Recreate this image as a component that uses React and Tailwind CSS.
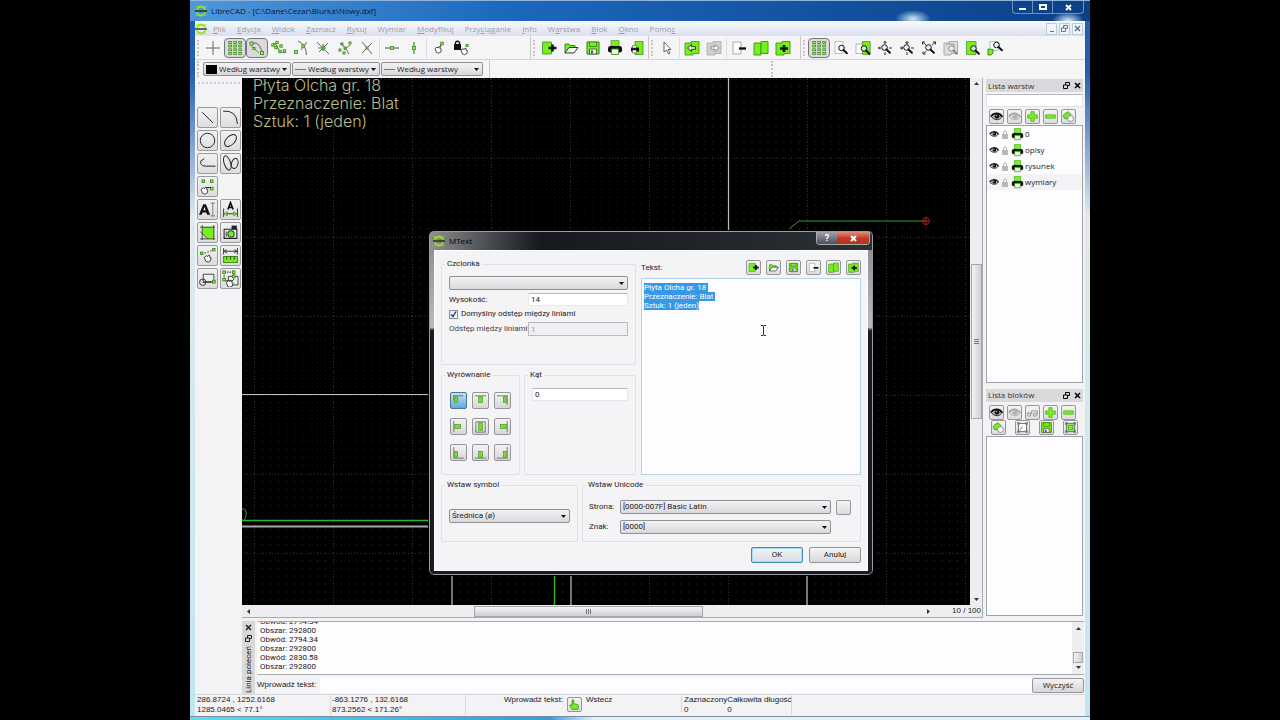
import React, { useEffect, useRef } from "react";

const LIME = "#76f01c";
const GREEN = "#3f8f1c";

function Svg({ size = 16, children }) {
  return (
    <svg width={size} height={size} viewBox="0 0 16 16" fill="none" aria-hidden="true" className="shrink-0">
      {children}
    </svg>
  );
}

const Node = ({ x, y, s = 3 }) => (
  <rect x={x - s / 2} y={y - s / 2} width={s} height={s} fill="#a6ee6a" stroke={GREEN} strokeWidth="0.9" />
);
const Lens = ({ x = 9, y = 9, c = "#111" }) => (
  <g>
    <circle cx={x} cy={y} r="2.8" fill="#e8f4fb" fillOpacity="0.8" stroke={c} strokeWidth="1" />
    <path d={`M${x + 2} ${y + 2} l3.4 3.2`} stroke={c} strokeWidth="2" strokeLinecap="round" />
  </g>
);
const Hand = ({ x = 0, y = 0 }) => (
  <path
    transform={`translate(${x} ${y})`}
    d="M1 3.6 L3 2.2 L4.2 3 L5 1.6 L6.2 2.2 L6 3.6 L7.4 4.2 L6.8 7 L4.6 8.2 L2.4 7.4 Z"
    fill="#fff"
    stroke="#222"
    strokeWidth="0.8"
  />
);
const GridDots = () => (
  <g>
    {[2.5, 6, 9.8, 13.4].map((y) =>
      [3, 8, 13].map((x) => (
        <rect key={`${x}-${y}`} x={x - 1.2} y={y - 1} width="2.6" height="2" fill="#a6ee6a" stroke={GREEN} strokeWidth="0.8" />
      ))
    )}
  </g>
);
const Printer = () => (
  <g>
    <path d="M4 0.5h8v6H4z" fill={LIME} stroke={GREEN} strokeWidth="0.6" />
    <path d="M3.5 6Q1 6 1 8.500V10.500Q1 12.500 3.500 12.500H12.500Q15 12.500 15 10.500V8.500Q15 6 12.500 6Z" fill="#111" />
    <path d="M4.500 9h7v5.500h-7z" fill="#eefde0" stroke={GREEN} strokeWidth="0.900" />
  </g>
);
const Eye = ({ c = "#111" }) => (
  <g>
    <path d="M1 8Q4 3.600 8.500 3.800Q13 4 15.200 8.400Q12 12 8 12Q3.600 12 1 8Z" fill={c} fillOpacity="0.200" />
    <path d="M1 8Q4 4 8.500 4.200Q13 4.500 15.200 8.800" stroke={c} strokeWidth="2.200" />
    <path d="M2 9Q5 12 9 12Q12 11.800 14 9.500" stroke={c} strokeWidth="1" />
    <circle cx="8.600" cy="7.800" r="3" fill={c} />
    <circle cx="7.600" cy="6.800" r="0.800" fill="#fff" />
  </g>
);
const Plus = () => <path d="M6 2h4v4h4v4h-4v4H6v-4H2V6h4z" fill={LIME} stroke="#58b52a" />;
const Minus = () => <path d="M2 6h12v4H2z" fill={LIME} stroke="#58b52a" />;
const Edit = () => (
  <g>
    <path d="M1.500 6.500L7 2l4 3.500-4.500 5.500-4-1z" fill={LIME} stroke={GREEN} />
    <circle cx="10.500" cy="10.500" r="3.600" fill="#fff" stroke="#777" />
  </g>
);
const Floppy = () => (
  <g>
    <path d="M2 2h12v12H2z" fill={LIME} stroke="#357a18" />
    <path d="M4.500 2h7v4.500h-7z" fill={LIME} stroke="#357a18" strokeWidth="0.800" />
    <path d="M4.500 9h7v5h-7z" fill="#eee" stroke="#444" strokeWidth="0.800" />
    <path d="M6 10.500h2v3H6z" fill="#555" />
  </g>
);
const Logo = () => (
  <g>
    <path d="M2 6Q8 -2 14 6M2 10Q8 18 14 10" stroke="#9be01c" strokeWidth="2.400" />
    <path d="M0 8h16" stroke="#12351a" strokeWidth="1.800" />
    <path d="M1 2h2M13 2h2M1 14h2M13 14h2" stroke="#9be01c" strokeWidth="1.500" />
  </g>
);

const ICONS = {
  cross: <path d="M8 1v14M1 8h14" stroke="#555" strokeWidth="0.900" />,
  grid: <GridDots />,
  snapEnd: (
    <g>
      <path d="M2.500 3.500L7 3Q11.500 5 12 9L14 12.500" stroke="#555" strokeWidth="0.900" />
      <path d="M2 6L6 9.500L10 13" stroke={GREEN} strokeWidth="0.800" />
      <Node x={2.5} y={3.5} /><Node x={13} y={13} /><Node x={5} y={8.5} s={2} />
    </g>
  ),
  snapOn: (
    <g>
      <path d="M2 3Q6 4 7 8T14 13" stroke="#555" strokeWidth="0.900" />
      <Node x={2} y={5} s={2.4} /><Node x={6} y={2.5} s={2.4} /><Node x={5} y={7.5} s={2.4} /><Node x={10} y={6} s={2.4} /><Node x={9} y={11.5} s={2.4} /><Node x={13.5} y={11} s={2.4} />
    </g>
  ),
  snapCenter: (
    <g>
      <path d="M5 1Q13 4 13.500 15M8 10L14 2" stroke="#555" strokeWidth="0.900" />
      <Node x={3} y={12} /><Node x={10} y={6} s={2.4} />
    </g>
  ),
  snapMiddle: (
    <g>
      <path d="M2 2Q6 7 14 14M4 12L13 3" stroke="#555" strokeWidth="0.900" />
      <path d="M3 8h8M8 4v7" stroke={GREEN} strokeWidth="1.200" />
      <Node x={8} y={8} s={2} />
    </g>
  ),
  snapDist: (
    <g>
      <path d="M3 3Q8 6 12 14M7 10l6-5" stroke="#555" strokeWidth="0.900" />
      <Node x={5} y={4} s={2} /><Node x={13} y={3} s={2} /><Node x={3} y={10} s={2} /><Node x={7} y={13} s={2} /><Node x={8} y={8} s={2} />
    </g>
  ),
  snapInter: (
    <g>
      <path d="M3 2l10 12M13 3L3 13" stroke="#555" strokeWidth="0.900" />
      <Node x={8} y={8} s={2} />
    </g>
  ),
  restrH: <g><path d="M1 8h14" stroke="#333" strokeWidth="0.900" /><Node x={8} y={8} /></g>,
  restrV: <g><path d="M8 2v12" stroke={GREEN} strokeWidth="1.200" /><Node x={8} y={8} /></g>,
  relZero: <g><Hand x={3} y={5} /><path d="M9 7l2-4" stroke="#222" /><Node x={11} y={3.5} s={2.5} /></g>,
  lockZero: (
    <g>
      <path d="M1 4h7v6H1z" fill="#111" /><path d="M2.500 4V2.500q2-2.500 4 0V4" stroke="#111" strokeWidth="1.300" />
      <Hand x={7} y={6.5} /><Node x={14} y={5.5} s={2} />
    </g>
  ),
  newFile: <g><path d="M1.500 2h9v12h-9z" fill={LIME} stroke={GREEN} strokeWidth="0.800" /><path d="M7.500 8h8M11.500 4.500v7" stroke="#111" strokeWidth="2.600" /></g>,
  open: (
    <g>
      <path d="M2 13V4h4l1 1.500h5V8" fill={LIME} stroke="#357a18" strokeWidth="0.900" />
      <path d="M2 13L6 7.500h9L11 13z" fill="#f3fde9" stroke="#222" strokeWidth="0.900" />
    </g>
  ),
  save: <Floppy />,
  print: <Printer />,
  preview: <g><path d="M6 1.500h8v13H6z" fill={LIME} stroke={GREEN} strokeWidth="0.800" /><path d="M2 7.500h8v4H2z" fill="#111" /><path d="M3.500 5.500h4V8h-4zM3.500 10h4v3h-4z" fill="#eefde0" stroke="#444" strokeWidth="0.600" /></g>,
  pointer: <path d="M5 2v10l2.500-2 2 4 1.500-1-2-3.500H12z" fill="#fff" stroke="#555" strokeWidth="0.900" />,
  undo: <g><path d="M1 3h6V1.500h8v12H9V15H1z" fill={LIME} stroke={GREEN} strokeWidth="0.800" /><path d="M3.500 8l4-3.500v2.200h4v2.600h-4v2.200z" fill="#e9fbd6" stroke="#222" strokeWidth="0.900" /></g>,
  redo: <g><path d="M1 3h6V1.500h8v12H9V15H1z" fill="#cfcfcf" stroke="#aaa" strokeWidth="0.800" /><path d="M13 8L9 4.500v2.200H5v2.600h4v2.200z" fill="#eee" stroke="#888" strokeWidth="0.900" /></g>,
  cut: <g><path d="M2 2h8v12H2z" fill="#fff" stroke="#aaa" /><path d="M8 8.500h7" stroke="#111" strokeWidth="2.400" /></g>,
  copy: <g><path d="M1 3h7v12H1z" fill={LIME} stroke={GREEN} strokeWidth="0.900" /><path d="M8 1.500h7v12H8z" fill={LIME} stroke={GREEN} strokeWidth="0.900" /></g>,
  paste: <g><path d="M1 3h6V1.500h8v12H9V15H1z" fill={LIME} stroke={GREEN} strokeWidth="0.900" /><path d="M5 8.500h8M9 5v7" stroke="#111" strokeWidth="2.600" /></g>,
  zoomRe: <g><path d="M2 1.500h8v12H2z" fill="#fff" stroke="#bbb" /><Lens x={8.5} y={8} /></g>,
  zoomWin: <g><path d="M1 4h6V2h8v11.500H1z" fill="#fff" stroke="#999" strokeWidth="0.700" /><path d="M7.500 1.500H15v13H7.500z" fill={LIME} stroke={GREEN} strokeWidth="0.700" /><Lens x={9} y={8.5} /></g>,
  zoomIn: <g><path d="M8 1v3M8 12v3M1 8h3M12 8h3M6.500 3L8 1.500 9.500 3M3 6.500L1.500 8 3 9.500" stroke="#333" /><Lens x={7.5} y={7.5} /></g>,
  zoomOut: <g><path d="M8 1v3M8 12v3M1 8h3M12 8h3M6.500 2L8 4 9.500 2M2 6.500L4 8 2 9.500" stroke="#333" /><Lens x={7.5} y={7.5} /></g>,
  zoomAuto: <g><path d="M1.500 2l4 3.500M14.500 2l-3.500 3M2 14l3.500-3M1.500 4.500V2H4M12 2h2.500v2.500M2 11.500V14h2.500" stroke="#333" /><Lens x={7.5} y={7.5} /></g>,
  zoomPrev: <g><path d="M1 3h5V1.500h8.500v12H8V15H1z" fill="#ddd" stroke="#aaa" /><path d="M3 5l4-2v1h4v3" stroke="#999" /><Lens x={8.5} y={8.5} c="#888" /></g>,
  zoomSel: <g><path d="M1.500 1.500h9.500v13H1.500z" fill={LIME} stroke={GREEN} strokeWidth="0.700" /><Lens x={8.5} y={8.5} /></g>,
  zoomPan: <g><path d="M3 1.500h8v9H3z" fill="#fff" stroke="#bbb" /><path d="M1 9l5 .5V13l-2 2H1z" fill={LIME} stroke={GREEN} /><Lens x={9.5} y={5} /></g>,
  eye: <Eye />,
  eyeOff: <Eye c="#aaa" />,
  plus: <Plus />,
  minus: <Minus />,
  edit: <Edit />,
  defreeze: <g><path d="M1 9h6V6h7v4h-2" stroke="#888" /><circle cx="4" cy="10.500" r="2" fill="#ddd" stroke="#888" /><circle cx="11" cy="10.500" r="2" fill="#ddd" stroke="#888" /></g>,
  blockEdit: <g><path d="M3 3h10v10H3z" fill="#fff" stroke="#555" />{[3, 13].map((x) => [3, 13].map((y) => <rect key={x + "-" + y} x={x - 1.5} y={y - 1.5} width="3" height="3" fill="#777" />))}<path d="M5 11l3-4" stroke="#555" /></g>,
  blockInsert: <g><path d="M3 3h10v10H3z" fill="#d8f8b8" stroke="#466" />{[3, 13].map((x) => [3, 13].map((y) => <rect key={x + "-" + y} x={x - 1.5} y={y - 1.5} width="3" height="3" fill="#576" />))}<path d="M5 5h6v6H5z" fill={LIME} stroke={GREEN} /></g>,
  line: <path d="M3 3l10 10" stroke="#222" strokeWidth="0.900" />,
  arc: <path d="M1 2Q14 1 14.500 14" stroke="#222" strokeWidth="0.900" />,
  circle: <circle cx="8" cy="8" r="6.800" stroke="#222" strokeWidth="0.900" />,
  ellipse: <ellipse cx="8" cy="8" rx="6.800" ry="4" transform="rotate(-45 8 8)" stroke="#222" strokeWidth="0.900" />,
  spline: <path d="M5 3.500Q.5 5 1.500 8Q3 11 7 10.500H15.500" stroke="#222" strokeWidth="0.900" />,
  poly: <g stroke="#222" strokeWidth="0.900"><ellipse cx="5" cy="7.500" rx="3" ry="7" transform="rotate(-18 5 7.500)" /><ellipse cx="12" cy="8" rx="3" ry="4.800" transform="rotate(15 12 8)" /></g>,
  points: <g><Node x={4} y={3} s={2.4} /><Node x={12} y={3} s={2.4} /><Node x={12} y={10} s={2.4} /><Hand x={1} y={7} /><path d="M7 9h4" stroke="#222" /></g>,
  text: <g><path d="M0 13L4 3h2.500l4 10H7.600l-.7-2.200H3.300L2.600 13zM4 8.800h2.300L5.200 5.500z" fill="#111" fillRule="evenodd" /><path d="M11 2h4M13 2v12M11 14h4" stroke="#888" /></g>,
  dim: <g><path d="M5.500 8L8 1.500 10.500 8M6.500 6h3" stroke="#111" strokeWidth="1.500" /><path d="M1.500 7v8M14.500 7v8M2 12h12" stroke="#333" strokeWidth="0.900" /><path d="M2 12l3-2v4zM14 12l-3-2v4z" fill={LIME} stroke={GREEN} strokeWidth="0.600" /></g>,
  hatch: <g><path d="M3 2.500h11v11.500H8L3 8.500z" fill={LIME} /><path d="M1 3h14M3 1v14M14 1v14M1 14h14M1 7l7 7" stroke="#333" strokeWidth="0.800" /></g>,
  image: <g><path d="M2 5h12v8.500H2z" fill="#eee" stroke="#222" /><path d="M9 1.500h5V5H9z" fill="#223" /><path d="M4 7v5" stroke="#555" /><circle cx="8.500" cy="9.300" r="3" fill={LIME} stroke="#244" /></g>,
  modify: <g><path d="M2 7L13 3" stroke="#555" strokeWidth="0.800" strokeDasharray="2 1" /><Node x={2.5} y={6} s={2.2} /><Node x={14} y={2.5} s={2.2} /><Hand x={4} y={6} /></g>,
  measure: <g><path d="M1.500 9h13v5.500h-13z" fill={LIME} stroke={GREEN} /><path d="M4.500 9v3M8 9v3M11.500 9v3M1.500 1v6M14.500 1v6M2 4h12M4.500 2.500L2 4l2.500 1.500M11.500 2.500L14 4l-2.500 1.500" stroke="#333" strokeWidth="0.900" /></g>,
  block: <g><path d="M4 4h10v7H4z" fill="#eee" stroke="#444" strokeWidth="0.900" /><circle cx="3.500" cy="11.500" r="3" stroke="#333" strokeWidth="0.900" /><path d="M3.500 11.500H12" stroke="#333" /><Node x={14} y={11} s={2.5} /></g>,
  select: <g><path d="M6 6h9v8H6z" fill="#eee" stroke="#444" strokeWidth="0.900" /><path d="M2 2h9v8H2z" stroke="#444" strokeDasharray="1.500 1" /><Node x={2} y={2} s={2.4} /><Node x={11} y={2} s={2.4} /><Node x={2} y={9} s={2.4} /><Node x={11} y={6} s={2.4} /><Hand x={3} y={8} /></g>,
  tap: <path d="M5 14L2 9l1.500-.8L5 9.500V2.500q1-1.500 2 0V7l5 1.200q1.500.6 1 2.300L12 14z" fill={LIME} stroke={GREEN} />,
};

const Icon = ({ name, size }) => <Svg size={size}>{ICONS[name]}</Svg>;

function ToolButton({ icon, label, checked }) {
  return (
    <button
      type="button"
      aria-label={label}
      aria-pressed={checked}
      className={
        "flex h-5 w-[22px] shrink-0 items-center justify-center rounded-sm " +
        (checked ? "border border-[#77777b] bg-[#dadade]" : "")
      }
    >
      <Icon name={icon} />
    </button>
  );
}

function SmallButton({ icon, label, size = 13 }) {
  return (
    <button
      type="button"
      aria-label={label}
      className="flex h-[15px] w-[15px] shrink-0 items-center justify-center rounded-xs border border-[#97979b] bg-linear-to-b from-[#f4f4f5] to-[#dcdcde]"
    >
      {icon && <Icon name={icon} size={size} />}
    </button>
  );
}

const Handle = () => <span className="mx-[2px] h-4 w-[3px] shrink-0 border-l-2 border-dotted border-[#c4c4c8]" />;
const Divider = () => <span className="mx-px h-5 w-px shrink-0 bg-[#dedee1]" />;

function Bar({ items, className = "" }) {
  return (
    <div role="toolbar" className={"flex items-center border-r border-[#c9c9cd] " + className}>
      <Handle />
      {items.map(([icon, label, checked], i) =>
        icon === "|" ? <Divider key={i} /> : <ToolButton key={i} icon={icon} label={label} checked={checked} />
      )}
    </div>
  );
}

const SNAP = [
  ["cross", "Swobodne"], ["grid", "Siatka", true], ["snapEnd", "Punkty końcowe", true], ["snapOn", "Na elemencie"],
  ["snapCenter", "Środek okręgu"], ["snapMiddle", "Środek"], ["snapDist", "Odległość"], ["snapInter", "Przecięcie"],
  ["|"], ["restrH", "Poziomo"], ["restrV", "Pionowo"], ["|"], ["relZero", "Względne zero"], ["lockZero", "Zablokuj zero"],
];
const FILE = [["newFile", "Nowy"], ["open", "Otwórz"], ["save", "Zapisz"], ["print", "Drukuj"], ["preview", "Podgląd wydruku"]];
const EDIT = [
  ["pointer", "Wskaźnik"], ["|"], ["undo", "Cofnij"], ["redo", "Ponów"], ["|"], ["cut", "Wytnij"], ["copy", "Kopiuj"], ["paste", "Wklej"],
];
const VIEW = [
  ["grid", "Pokaż siatkę", true], ["zoomRe", "Odśwież"], ["zoomWin", "Powiększ okno"], ["zoomIn", "Powiększ"], ["zoomOut", "Pomniejsz"],
  ["zoomAuto", "Auto"], ["zoomPrev", "Poprzedni widok"], ["zoomSel", "Zaznaczenie"], ["zoomPan", "Przesuń"],
];
const TOOLS = [
  ["line", "Linia"], ["arc", "Łuk"], ["circle", "Okrąg"], ["ellipse", "Elipsa"], ["spline", "Krzywa"], ["poly", "Polilinia"],
  ["points", "Punkty"], null, ["text", "Tekst"], ["dim", "Wymiar"], ["hatch", "Kreskowanie"], ["image", "Obraz"],
  ["modify", "Modyfikuj"], ["measure", "Pomiar"], ["block", "Blok"], ["select", "Zaznacz"],
];
const MENU = [
  ["", "P", "lik"], ["", "E", "dycja"], ["", "W", "idok"], ["", "Z", "aznacz"], ["", "R", "ysuj"], ["Wymiar", "", ""],
  ["", "M", "odyfikuj"], ["Przy", "c", "iąganie"], ["", "I", "nfo"], ["W", "a", "rstwa"], ["", "B", "lok"], ["", "O", "kno"], ["Pomo", "c", ""],
];

function Select({ label, value, id, className = "", swatch }) {
  return (
    <div className={"relative flex items-center " + className}>
      <select
        id={id}
        aria-label={label}
        className={
          "h-[14px] w-full appearance-none rounded-xs border border-[#8f8f94] bg-linear-to-b from-[#f3f3f4] to-[#d9d9dc] pr-2 text-[#1c1c1c] outline-none " +
          (swatch ? "pl-[15px]" : "pl-[2px]")
        }
      >
        <option>{value}</option>
      </select>
      {swatch === "black" && <span className="absolute left-[3px] h-[9px] w-[11px] bg-black" />}
      {swatch === "line" && <span className="absolute left-[3px] h-px w-[11px] bg-[#777]" />}
      <svg width="5" height="3" viewBox="0 0 5 3" className="pointer-events-none absolute right-1" aria-hidden="true">
        <path d="M0 0h5L2.500 3z" fill="#111" />
      </svg>
    </div>
  );
}

function Restore() {
  return (
    <svg width="7" height="7" viewBox="0 0 7 7" fill="none" aria-hidden="true">
      <path d="M2.500 3V.5h4v3H5M.5 3h4v3.500h-4z" stroke="currentColor" strokeWidth="1" />
    </svg>
  );
}
function Cross({ w = 1.5 }) {
  return (
    <svg width="7" height="7" viewBox="0 0 7 7" aria-hidden="true">
      <path d="M1 1l5 5M6 1L1 6" stroke="currentColor" strokeWidth={w} />
    </svg>
  );
}

function DockTitle({ children }) {
  return (
    <div className="flex h-[13px] items-center gap-1 bg-[#d9d9dc] px-[2px] text-[#333]">
      <h2 className="flex-1">{children}</h2>
      <button type="button" aria-label="Odepnij" className="text-black"><Restore /></button>
      <button type="button" aria-label="Zamknij" className="text-black"><Cross /></button>
    </div>
  );
}

function Arrow({ dir }) {
  const d = { up: "M0 4h5L2.500 1z", down: "M0 1h5L2.500 4z", left: "M4 0v5L1 2.500z", right: "M1 0v5L4 2.500z" }[dir];
  return <svg width="5" height="5" viewBox="0 0 5 5" aria-hidden="true"><path d={d} fill="#333" /></svg>;
}

function Drawing() {
  return (
    <div className="relative min-h-0 min-w-0 flex-1 overflow-hidden bg-black">
      <svg className="absolute inset-0 h-full w-full" fill="none" role="img" aria-label="Rysunek">
        <defs>
          <pattern id="minor" width="7.900" height="7.900" x="4" y="8" patternUnits="userSpaceOnUse">
            <rect width="1" height="1" x="0" y="0" fill="#303230" />
          </pattern>
          <pattern id="major" width="79" height="79" x="12" y="80" patternUnits="userSpaceOnUse">
            <path d="M.5 0V79M0 .5H79" stroke="#282a28" strokeWidth="1" strokeDasharray="1 2" />
          </pattern>
        </defs>
        <rect width="100%" height="100%" fill="url(#minor)" />
        <rect width="100%" height="100%" fill="url(#major)" />
        <path d="M486.500 0V160M0 316.500H190M210 490V540M329 490V540M565 490V540" stroke="#bdbdbd" strokeWidth="1.200" />
        <path d="M0 448.500H190" stroke="#a8a8a8" strokeWidth="2" />
        <path d="M0 442.500H190M312.500 490V540" stroke="#2fb52f" strokeWidth="1.400" />
        <path d="M0 431q5-1 4 6t-4 5M684 143H557L547 151" stroke="#2f9a2f" />
        <circle cx="684" cy="143" r="3.500" stroke="#b01818" />
        <path d="M680 143h8M684 139v8" stroke="#b01818" />
      </svg>
      <p className="relative -mt-0.5 pl-[11px] font-['Inter',sans-serif] text-base leading-[18px] font-light whitespace-pre text-[#b9bd8e]">
        {"Płyta Olcha gr. 18\nPrzeznaczenie: Blat\nSztuk: 1 (jeden)"}
      </p>
    </div>
  );
}

function Group({ title, className = "", inner = "", children }) {
  return (
    <fieldset className={"min-w-0 rounded-xs border border-[#dfe1e6] " + className}>
      <legend className="ml-[3px] px-[2px] leading-3">{title}</legend>
      <div className={inner}>{children}</div>
    </fieldset>
  );
}

const ALIGN = [
  ["Góra lewo", "M3 3h10M3 2v6", 4, 4, 3, 6], ["Góra środek", "M2 3h12", 6, 4, 4, 6], ["Góra prawo", "M2 3h11M13 2v11", 9, 4, 3, 6],
  ["Środek lewo", "M3 2v12", 4, 6, 6, 4], ["Środek", "M3 3h10v11H3z", 6, 4, 4, 8], ["Środek prawo", "M13 2v12", 6, 6, 6, 4],
  ["Dół lewo", "M3 2v12h11", 4, 7, 3, 6], ["Dół środek", "M2 14h12", 6, 7, 4, 6], ["Dół prawo", "M13 2v12H2", 9, 7, 3, 6],
];

const TEXT_BUTTONS = [["newFile", "Wyczyść"], ["open", "Wczytaj"], ["save", "Zapisz tekst"], ["cut", "Wytnij tekst"], ["copy", "Kopiuj tekst"], ["paste", "Wklej tekst"]];

const inputCls = "h-[13px] min-w-0 flex-1 border border-t-[#b5b8bd] border-[#e6e7ea] bg-white pr-1 pl-[2px] outline-none";

function MTextDialog() {
  const area = useRef(null);
  useEffect(() => {
    area.current.focus();
    area.current.select();
  }, []);
  return (
    <section
      role="dialog"
      aria-label="MText"
      className="absolute top-[230px] left-[238px] flex w-[446px] flex-col rounded-md border border-black bg-[#2b2e33] bg-linear-to-b from-[#85888c] from-0% via-[#b9babd] via-28% to-[#181b20] to-29% px-[5px] pb-1 font-['Roboto','Liberation_Sans',sans-serif] shadow-[inset_0_0_0_1px_#9a9da2]"
    >
      <header className="-mx-1 mt-px flex h-[18px] items-start rounded-t-sm bg-linear-to-r from-[#8d8f92] via-[#16191d] via-25% to-[#2c3136] pl-[3px] text-black">
        <span className="flex h-full flex-1 items-center gap-1">
          <Svg size={12}><Logo /></Svg>
          <h1 className="font-['Open_Sans','Noto_Sans',sans-serif]">MText</h1>
        </span>
        <span className="mr-[2px] flex h-[13px] overflow-hidden rounded-b-sm border border-t-0 border-[#a9abb0] text-white">
          <button type="button" aria-label="Pomoc" className="flex w-[20px] items-center justify-center bg-linear-to-b from-[#a0a2ab] to-[#4f515c] text-[9px] font-bold">?</button>
          <button type="button" aria-label="Zamknij okno" className="flex w-8 items-center justify-center bg-linear-to-b from-[#dd8c7f] via-[#c23a26] to-[#b8321e]"><Cross w={2} /></button>
        </span>
      </header>
      <div className="flex flex-col gap-1 border border-white bg-[#f4f3f5] px-1.5 pt-[7px] pb-[7px]">
        <div className="flex gap-[5px]">
          <div className="flex w-[195px] shrink-0 flex-col gap-1">
            <Group title="Czcionka" className="h-[107px]" inner="px-[7px] pt-[6px]">
              <Select label="Czcionka" value="" />
              <div className="mt-[3px] flex items-center">
                <label htmlFor="height" className="w-[79px] shrink-0">Wysokość:</label>
                <input id="height" defaultValue="14" className={inputCls} />
              </div>
              <label className="mt-0.5 flex h-3 items-center gap-[3px]">
                <input
                  type="checkbox"
                  defaultChecked
                  className="peer h-[9px] w-[9px] appearance-none border border-[#8b8f96] bg-[#e8eef6] bg-[linear-gradient(135deg,#dfe7f2,#ffffff)]"
                />
                <svg width="9" height="9" viewBox="0 0 9 9" fill="none" className="-ml-3 hidden peer-checked:block" aria-hidden="true">
                  <path d="M2 4.500L4 6.500 7 1.500" stroke="#283c7c" strokeWidth="1.400" />
                </svg>
                Domyślny odstęp między liniami
              </label>
              <div className="mt-0.5 flex items-center text-[#444]">
                <label htmlFor="spacing" className="w-[79px] shrink-0 whitespace-nowrap">Odstęp między liniami:</label>
                <input id="spacing" disabled defaultValue="1" className="h-[14px] min-w-0 flex-1 border border-[#b9bbbf] bg-[#f0eff1] pl-[2px] text-[#999]" />
              </div>
            </Group>
            <div className="flex gap-1">
              <Group title="Wyrównanie" className="h-[106px] w-[79px] shrink-0" inner="px-2 pt-[11px]">
                <div className="grid grid-cols-3 gap-x-[5px] gap-y-[9px]">
                  {ALIGN.map(([label, path, x, y, w, h], i) => (
                    <button
                      key={label}
                      type="button"
                      aria-label={label}
                      aria-pressed={i === 0}
                      className={
                        "flex h-[17px] w-[17px] items-center justify-center rounded-xs border " +
                        (i === 0
                          ? "border-[#4c7891] bg-linear-to-b from-[#c5e1f3] to-[#5fabd8]"
                          : "border-[#949499] bg-linear-to-b from-[#f4f4f5] to-[#d6d6d9]")
                      }
                    >
                      <Svg size={15}>
                        <path d={path} stroke="#666" strokeWidth="0.900" />
                        <rect x={x} y={y} width={w} height={h} fill="#7ae01c" stroke={GREEN} strokeWidth="0.700" />
                      </Svg>
                    </button>
                  ))}
                </div>
              </Group>
              <Group title="Kąt" className="h-[106px] flex-1" inner="flex px-[7px] pt-[7px]">
                <input aria-label="Kąt" defaultValue="0" className={inputCls} />
              </Group>
            </div>
          </div>
          <div className="flex min-w-0 flex-1 flex-col">
            <div className="flex h-[19px] items-center">
              <label htmlFor="mtext" className="flex-1">Tekst:</label>
              <div className="flex gap-[5px]">
                {TEXT_BUTTONS.map(([icon, label]) => <SmallButton key={label} icon={icon} label={label} size={11} />)}
              </div>
            </div>
            <textarea
              id="mtext"
              ref={area}
              spellCheck={false}
              defaultValue={"Płyta Olcha gr. 18\nPrzeznaczenie: Blat\nSztuk: 1 (jeden)"}
              className="mt-px w-full flex-1 resize-none border border-[#b7d4e4] bg-[#fdfcfe] px-[2px] py-1 leading-[9px] outline-none selection:bg-[#3898e8] selection:text-white"
            />
          </div>
        </div>
        <div className="flex gap-1">
          <Group title="Wstaw symbol" className="h-[63px] w-[137px] shrink-0" inner="px-[7px] pt-[18px]">
            <Select label="Symbol" value="Średnica (ø)" />
          </Group>
          <Group title="Wstaw Unicode" className="h-[63px] flex-1" inner="flex flex-col gap-1 px-[6px] pt-2">
            <div className="flex h-4 items-center">
              <label htmlFor="page" className="w-[31px]">Strona:</label>
              <Select id="page" label="Strona" value="[0000-007F] Basic Latin" className="w-[211px]" />
              <span className="ml-[5px]"><SmallButton label="Wstaw znak" /></span>
            </div>
            <div className="flex h-4 items-center">
              <label htmlFor="char" className="w-[31px]">Znak:</label>
              <Select id="char" label="Znak" value="[0000]" className="w-[211px]" />
            </div>
          </Group>
        </div>
        <div className="mt-px flex justify-end gap-[6px]">
          <button type="button" className="h-4 w-[52px] rounded-xs border border-[#3f8fb5] bg-linear-to-b from-[#f2f4f5] to-[#d7dfe4] shadow-[inset_0_0_0_1px_#a5dcf2]">OK</button>
          <button type="button" className="h-4 w-[52px] rounded-xs border border-[#939397] bg-linear-to-b from-[#f4f4f5] to-[#d8d8db]">Anuluj</button>
        </div>
      </div>
      <svg width="7" height="11" viewBox="0 0 7 11" fill="none" className="absolute top-[94px] left-[331px]" aria-hidden="true">
        <path d="M1 .5h2l.5.5.500-.5H6M3.500 1v9M1 10.500h2l.5-.5.500.5H6" stroke="#333" />
      </svg>
    </section>
  );
}

const LAYERS = ["0", "opisy", "rysunek", "wymiary"];

function StatusPair({ top, bottom, className = "" }) {
  return (
    <div className={"leading-[10px] whitespace-nowrap " + className}>
      <p>{top}</p>
      <p>{bottom}</p>
    </div>
  );
}

export default function App() {
  return (
    <div className="flex min-h-screen justify-center bg-black font-['Open_Sans','Noto_Sans',sans-serif] text-[8px] leading-3 text-[#222]">
      <div className="relative flex w-full max-w-[900px] flex-col bg-linear-to-b from-[#1f5fb0] from-10% via-[#dfe9ef] via-30% to-[#bfe6f0] px-[5px]">
        <header className="-mx-[5px] flex h-[21px] items-start border-t border-[#8fb4dc] bg-[radial-gradient(ellipse_18px_9px_at_723px_18px,#c9ecf0,transparent),radial-gradient(ellipse_16px_9px_at_878px_20px,#d9f0f6,transparent),linear-gradient(to_right,#4f97da,#1c68bd_35%,#0c3f86)] pl-[5px] text-[#071a33]">
          <span className="flex h-full flex-1 items-center gap-1">
            <Svg size={12}><Logo /></Svg>
            <h1>LibreCAD - [C:\Dane\Cezar\Biurka\Nowy.dxf]</h1>
          </span>
          <span className="mr-[6px] flex h-[13px] rounded-b-sm border border-t-0 border-[#7390b8] text-white">
            <button type="button" aria-label="Minimalizuj" className="flex w-5 items-end justify-center border-r border-[#7390b8] pb-[3px]"><span className="h-0.5 w-[7px] bg-white" /></button>
            <button type="button" aria-label="Przywróć" className="flex w-5 items-center justify-center border-r border-[#7390b8]"><span className="h-[6px] w-2 border-2 border-white" /></button>
            <button type="button" aria-label="Zamknij program" className="flex w-[30px] items-center justify-center"><Cross w={2} /></button>
          </span>
        </header>
        <nav className="flex h-[15px] items-center bg-linear-to-b from-[#f8f9fc] to-[#dbe0ef] text-[#9b9da5]">
          <Svg size={12}><Logo /></Svg>
          <ul className="ml-[6px] flex flex-1 gap-[11px]">
            {MENU.map(([a, u, b]) => (
              <li key={a + u + b}><button type="button">{a}<u>{u}</u>{b}</button></li>
            ))}
          </ul>
          <span className="flex gap-[2px] pr-[2px] text-[#53789c]">
            <button type="button" aria-label="Minimalizuj rysunek" className="flex h-3 w-[11px] items-end justify-center border border-[#bccbdc] bg-[#f0f5fb] pb-[2px]"><span className="h-px w-1 bg-[#53789c]" /></button>
            <button type="button" aria-label="Przywróć rysunek" className="flex h-3 w-[11px] items-center justify-center border border-[#bccbdc] bg-[#f0f5fb]"><Restore /></button>
            <button type="button" aria-label="Zamknij rysunek" className="flex h-3 w-[11px] items-center justify-center border border-[#bccbdc] bg-[#f0f5fb]"><Cross /></button>
          </span>
        </nav>
        <div className="flex h-6 items-stretch border-b border-[#d5d5d9] bg-[#f5f4f6]">
          <Bar items={SNAP} className="w-[336px] shrink-0" />
          <Bar items={FILE} />
          <Bar items={EDIT} className="w-[152px] shrink-0" />
          <Bar items={VIEW} className="border-r-0" />
        </div>
        <div className="flex h-[18px] items-center bg-[#f5f4f6]">
          <div className="flex h-full w-[295px] shrink-0 items-center gap-px border-r border-[#c9c9cd]">
            <Handle />
            <Select label="Kolor" value="Według warstwy" swatch="black" className="w-[88px]" />
            <Select label="Szerokość" value="Według warstwy" swatch="line" className="w-[88px]" />
            <Select label="Typ linii" value="Według warstwy" swatch="line" className="w-[102px]" />
          </div>
          <span className="w-[279px] shrink-0" />
          <Handle />
        </div>
        <div className="flex min-h-0 flex-1 bg-[#f3f2f4]">
          <aside className="flex w-[47px] shrink-0 flex-col items-center">
            <span className="mt-1 h-[2px] w-[42px] border-t-2 border-dotted border-[#d0d0d4]" />
            <div className="mt-[23px] grid grid-cols-2 gap-[2px]">
              {TOOLS.map((t, i) =>
                t ? (
                  <button
                    key={t[0]}
                    type="button"
                    aria-label={t[1]}
                    className="flex h-[21px] w-[21px] items-center justify-center rounded-xs border border-[#9a9a9e] bg-linear-to-b from-[#f2f2f3] to-[#dddddf]"
                  >
                    <Icon name={t[0]} size={17} />
                  </button>
                ) : <span key={i} />
              )}
            </div>
          </aside>
          <div className="flex min-w-0 flex-1 flex-col">
            <div className="flex min-h-0 flex-1">
              <main className="flex min-w-0 flex-1 flex-col border-r border-b border-[#a9a9b0]">
                <div className="flex min-h-0 flex-1">
                  <Drawing />
                  <div className="flex w-3 flex-col items-center bg-[#eeedef] py-[3px]">
                    <Arrow dir="up" />
                    <span className="flex-[180]" />
                    <span className="flex w-[11px] flex-[155] items-center justify-center border border-[#a5a5aa] bg-linear-to-r from-[#f4f4f5] to-[#cfcfd4]">
                      <span className="h-[5px] w-[5px] border-y border-[#777] bg-[linear-gradient(#777,#777)] bg-[length:100%_1px] bg-center bg-no-repeat" />
                    </span>
                    <span className="flex-[180]" />
                    <Arrow dir="down" />
                  </div>
                </div>
                <div className="flex h-3 items-center bg-[#eeedef] pl-1">
                  <Arrow dir="left" />
                  <span className="flex-[224]" />
                  <span className="flex h-[11px] flex-[227] items-center justify-center border border-[#a5a5aa] bg-linear-to-b from-[#f4f4f5] to-[#cfcfd4]">
                    <span className="h-[5px] w-[5px] border-x border-[#777] bg-[linear-gradient(#777,#777)] bg-[length:1px_100%] bg-center bg-no-repeat" />
                  </span>
                  <span className="flex-[224]" />
                  <Arrow dir="right" />
                  <span className="w-[51px] pr-px text-right font-['Liberation_Sans',sans-serif]">10 / 100</span>
                </div>
              </main>
              <aside className="flex w-[102px] shrink-0 flex-col pr-[2px] pl-[3px] pt-px">
                <DockTitle>Lista warstw</DockTitle>
                <input aria-label="Filtr warstw" className="mt-[2px] h-[13px] w-full border border-[#e2e2e6] border-t-[#b5b8bd] bg-white" />
                <div className="flex gap-[3px] px-[3px] pt-[2px] pb-px">
                  {[["eye", "Pokaż wszystkie"], ["eyeOff", "Ukryj wszystkie"], ["plus", "Dodaj warstwę"], ["minus", "Usuń warstwę"], ["edit", "Edytuj warstwę"]].map(([n, l]) => (
                    <SmallButton key={l} icon={n} label={l} />
                  ))}
                </div>
                <ul className="flex-[260] border border-[#a0a0a6] bg-[#fdfcfe]">
                  {LAYERS.map((name, i) => (
                    <li key={name} className={"flex h-4 items-center pl-[2px] " + (i === 3 ? "bg-[#f3f2f4]" : "")}>
                      <Svg size={10}><Eye /></Svg>
                      <svg width="6" height="9" viewBox="0 0 6 9" fill="none" className="mx-[3px]" aria-hidden="true">
                        <path d="M1.500 4V2q1.500-2 3 0v2" stroke="#b0b0b4" />
                        <path d="M0 4h6v5H0z" fill="#b8b8bc" />
                      </svg>
                      <Svg size={13}><Printer /></Svg>
                      <span className="ml-px">{name}</span>
                    </li>
                  ))}
                </ul>
                <div className="mt-[6px]"><DockTitle>Lista bloków</DockTitle></div>
                <div className="flex gap-[3px] px-[3px] pt-[3px]">
                  {[["eye", "Pokaż bloki"], ["eyeOff", "Ukryj bloki"], ["defreeze", "Przełącz"], ["plus", "Dodaj blok"], ["minus", "Usuń blok"]].map(([n, l]) => (
                    <SmallButton key={l} icon={n} label={l} />
                  ))}
                </div>
                <div className="flex justify-around pb-px">
                  {[["edit", "Zmień nazwę"], ["blockEdit", "Edytuj blok"], ["save", "Zapisz blok"], ["blockInsert", "Wstaw blok"]].map(([n, l]) => (
                    <SmallButton key={l} icon={n} label={l} />
                  ))}
                </div>
                <div className="mb-[2px] flex-[181] border border-[#a0a0a6] bg-[#fdfcfe]" />
              </aside>
            </div>
            <div className="mt-[3px] flex h-[73px]">
              <div className="flex w-[13px] flex-col items-center gap-1 bg-[#d9d9dc] pt-[3px]">
                <button type="button" aria-label="Zamknij wiersz"><Cross /></button>
                <button type="button" aria-label="Odepnij wiersz"><Restore /></button>
                <h2 className="rotate-180 font-['Roboto','Liberation_Sans',sans-serif] whitespace-nowrap [writing-mode:vertical-rl]">Linia poleceń</h2>
              </div>
              <div className="flex min-w-0 flex-1 flex-col pl-[2px]">
                <div className="flex h-[54px] border border-[#a9a9b0] border-x-transparent bg-[#fdfcfe]">
                  <div className="flex min-w-0 flex-1 flex-col justify-end overflow-hidden pb-[3px] pl-[2px] font-['Roboto','Liberation_Sans',sans-serif] leading-[9px]">
                    {["Obwód: 2794.34", "Obszar: 292800", "Obwód: 2794.34", "Obszar: 292800", "Obwód: 2830.58", "Obszar: 292800"].map((l, i) => (
                      <p key={i}>{l}</p>
                    ))}
                  </div>
                  <div className="flex w-3 flex-col items-center bg-[#eeedef] py-1">
                    <Arrow dir="up" />
                    <span className="flex-1" />
                    <span className="mb-[2px] h-[11px] w-[10px] border border-[#a5a5aa] bg-linear-to-r from-[#f4f4f5] to-[#cfcfd4]" />
                    <Arrow dir="down" />
                  </div>
                </div>
                <div className="mt-[2px] flex h-4 items-center">
                  <label htmlFor="cmd" className="w-[63px] font-['Liberation_Sans',sans-serif] whitespace-nowrap">Wprowadź tekst:</label>
                  <input id="cmd" className="h-full min-w-0 flex-1 bg-[#fdfcfe] outline-none" />
                  <button type="button" className="mr-px h-[15px] w-[52px] rounded-xs border border-[#97979b] bg-linear-to-b from-[#f4f4f5] to-[#d6d6d9]">Wyczyść</button>
                </div>
              </div>
            </div>
          </div>
        </div>
        <footer className="flex h-[22px] items-start border-t border-[#d8d8dc] bg-[#f3f2f4] font-['Liberation_Sans',sans-serif]">
          <StatusPair top="286.8724 , 1252.6168" bottom="1285.0465 < 77.1°" className="w-[136px] border-r border-[#d8d8dc] pl-[2px]" />
          <StatusPair top="-863.1276 , 132.6168" bottom="873.2562 < 171.26°" className="w-[135px] border-r border-[#d8d8dc] pl-[1px]" />
          <div className="flex w-[216px] border-r border-[#d8d8dc] pl-[38px] leading-[10px]">
            <span className="w-[63px] whitespace-nowrap">Wprowadź tekst:</span>
            <span className="mt-[2px] mr-1"><SmallButton icon="tap" label="Mysz" /></span>
            <span>Wstecz</span>
          </div>
          <div className="flex w-[110px] border-r border-[#d8d8dc] pl-[2px]">
            <StatusPair top="Zaznaczony" bottom="0" className="w-11" />
            <StatusPair top="Całkowita długość" bottom="0" />
          </div>
        </footer>
        <div className="-mx-[5px] h-1 border-t border-[#7f8c98] bg-linear-to-r from-[#58dff0] via-[#2f9fe0] via-40% to-[#e4f1f5] to-45%" />
        <MTextDialog />
      </div>
    </div>
  );
}
